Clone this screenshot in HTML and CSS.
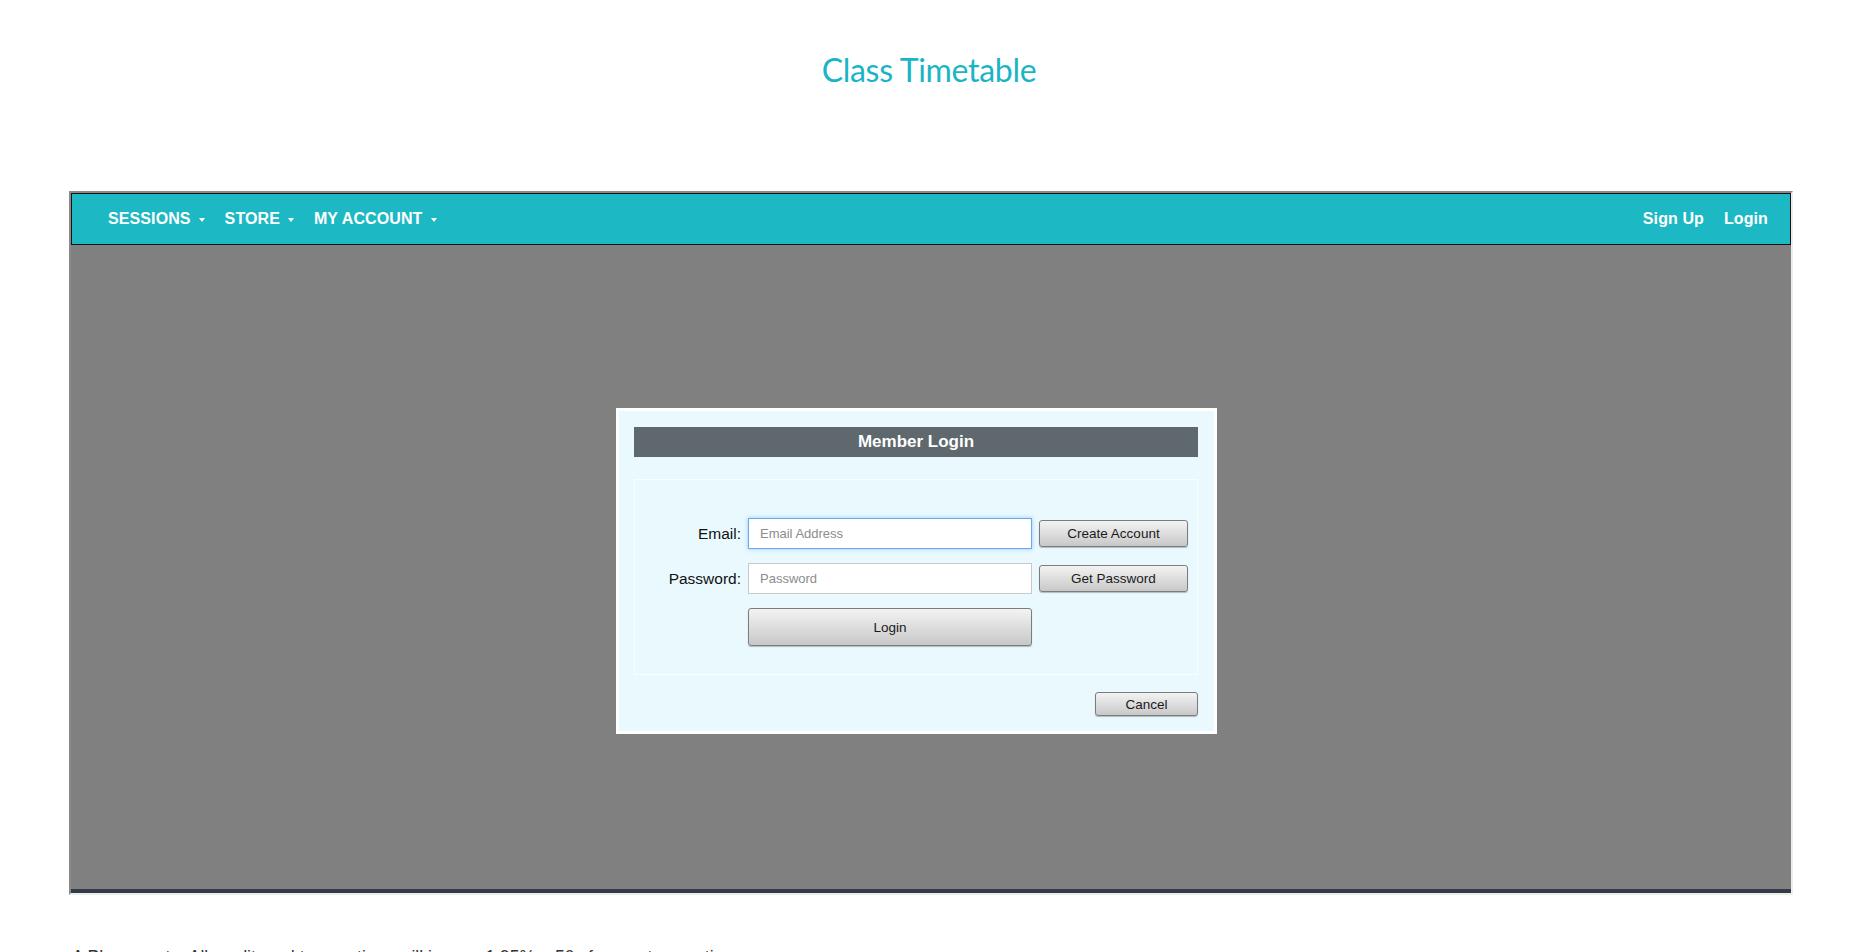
FILE: index.html
```html
<!DOCTYPE html>
<html lang="en">
<head>
<meta charset="utf-8">
<title>Class Timetable</title>
<link rel="stylesheet" href="styles.css">
</head>
<body>
<header class="page-head">
  <h1 class="page-title">Class Timetable</h1>
</header>

<div class="frame">
  <nav class="navbar">
    <ul class="nav-left">
      <li class="nav-item">SESSIONS<span class="caret"></span></li>
      <li class="nav-item">STORE<span class="caret"></span></li>
      <li class="nav-item">MY ACCOUNT<span class="caret"></span></li>
    </ul>
    <ul class="nav-right">
      <li class="nav-item">Sign Up</li>
      <li class="nav-item">Login</li>
    </ul>
  </nav>

  <div class="content">
    <div class="modal">
      <div class="modal-head">Member Login</div>
      <div class="login-box">
        <div class="login-grid">
          <label class="field-label">Email:</label>
          <input class="field field-focus" type="text" placeholder="Email Address">
          <button class="btn btn-side">Create Account</button>

          <label class="field-label">Password:</label>
          <input class="field" type="password" placeholder="Password">
          <button class="btn btn-side">Get Password</button>

          <span class="spacer"></span>
          <button class="btn btn-login">Login</button>
          <span class="spacer"></span>
        </div>
      </div>
      <div class="modal-foot">
        <button class="btn btn-cancel">Cancel</button>
      </div>
    </div>
  </div>
  <div class="footer-bar"></div>
</div>

<p class="note">A Please note: All credit card transactions will incur a 1.95% + 50c fee per transaction.</p>
</body>
</html>
```

FILE: styles.css
```css
html, body {
  margin: 0;
  padding: 0;
  background: #ffffff;
  font-family: "Liberation Sans", Arial, Helvetica, sans-serif;
  overflow: hidden;
}

.page-head {
  height: 191px;
  box-sizing: border-box;
  padding-top: 50px;
  text-align: center;
}

.page-title {
  margin: 0 0 0 6px;
  font-family: Lato, "Open Sans", sans-serif;
  font-weight: 400;
  font-size: 32px;
  line-height: 40px;
  color: #1ab5c5;
  letter-spacing: -0.3px;
}

.frame {
  margin-left: 69px;
  width: 1720px;
  border-style: solid;
  border-width: 2px;
  border-color: #8a8a8a #ececec #ececec #8a8a8a;
}

.navbar {
  height: 50px;
  background: #1cb8c4;
  border: 1px solid #111;
  display: flex;
  justify-content: space-between;
  align-items: center;
  padding: 0 12px 0 26px;
}

.nav-left, .nav-right {
  list-style: none;
  margin: 0;
  padding: 0;
  display: flex;
  align-items: center;
}

.nav-item {
  color: #ffffff;
  font-weight: 700;
  font-size: 16px;
  line-height: 20px;
  padding: 0 10px;
  letter-spacing: 0.1px;
  display: flex;
  align-items: center;
}

.caret {
  display: inline-block;
  width: 0;
  height: 0;
  margin-left: 8px;
  margin-top: 2px;
  border-top: 4px solid #ffffff;
  border-left: 3.5px solid transparent;
  border-right: 3.5px solid transparent;
}

.content {
  position: relative;
  height: 644px;
  background: #808080;
}

.modal {
  position: absolute;
  left: 545px;
  top: 163px;
  width: 564px;
  padding: 16px 16px 15px 15px;
  background: #e9f9fe;
  border: 3px solid #ffffff;
}

.modal-head {
  height: 30px;
  background: #5e686d;
  color: #ffffff;
  font-weight: 700;
  font-size: 17px;
  line-height: 30px;
  text-align: center;
}

.login-box {
  margin-top: 22px;
  height: 194px;
  border: 1px solid #fbfeff;
  box-sizing: content-box;
  padding: 0;
}

.login-grid {
  display: grid;
  grid-template-columns: 106px 284px 150px;
  column-gap: 7px;
  row-gap: 14px;
  align-items: center;
  padding-top: 38px;
}

.field-label {
  text-align: right;
  font-size: 15.5px;
  color: #111;
}

.field {
  box-sizing: border-box;
  height: 31px;
  width: 284px;
  padding: 0 11px;
  border: 1px solid #c9c9c9;
  background: #ffffff;
  font-family: "Liberation Sans", Arial, sans-serif;
  font-size: 13px;
  outline: none;
}

.field::placeholder {
  color: #8c8c8c;
}

.field-focus {
  border-color: #69a9ee;
  box-shadow: 0 0 4px rgba(90, 160, 235, 0.55);
}

.btn {
  box-sizing: border-box;
  font-family: "Liberation Sans", Arial, sans-serif;
  font-size: 13.5px;
  color: #1a1a1a;
  background: linear-gradient(#f3f3f3, #c8c8c8);
  border: 1px solid #7c7c7c;
  border-radius: 3px;
  box-shadow: 0 1px 1px rgba(0, 0, 0, 0.25);
  padding: 0;
}

.btn-side {
  width: 149px;
  height: 27px;
}

.btn-login {
  width: 284px;
  height: 38px;
}

.modal-foot {
  display: flex;
  justify-content: flex-end;
  margin-top: 17px;
}

.btn-cancel {
  width: 103px;
  height: 24px;
}

.footer-bar {
  height: 4px;
  background: #323c46;
}

.note {
  margin: 52px 0 0 72px;
  font-size: 17.5px;
  line-height: 20px;
  color: #333333;
}
```
